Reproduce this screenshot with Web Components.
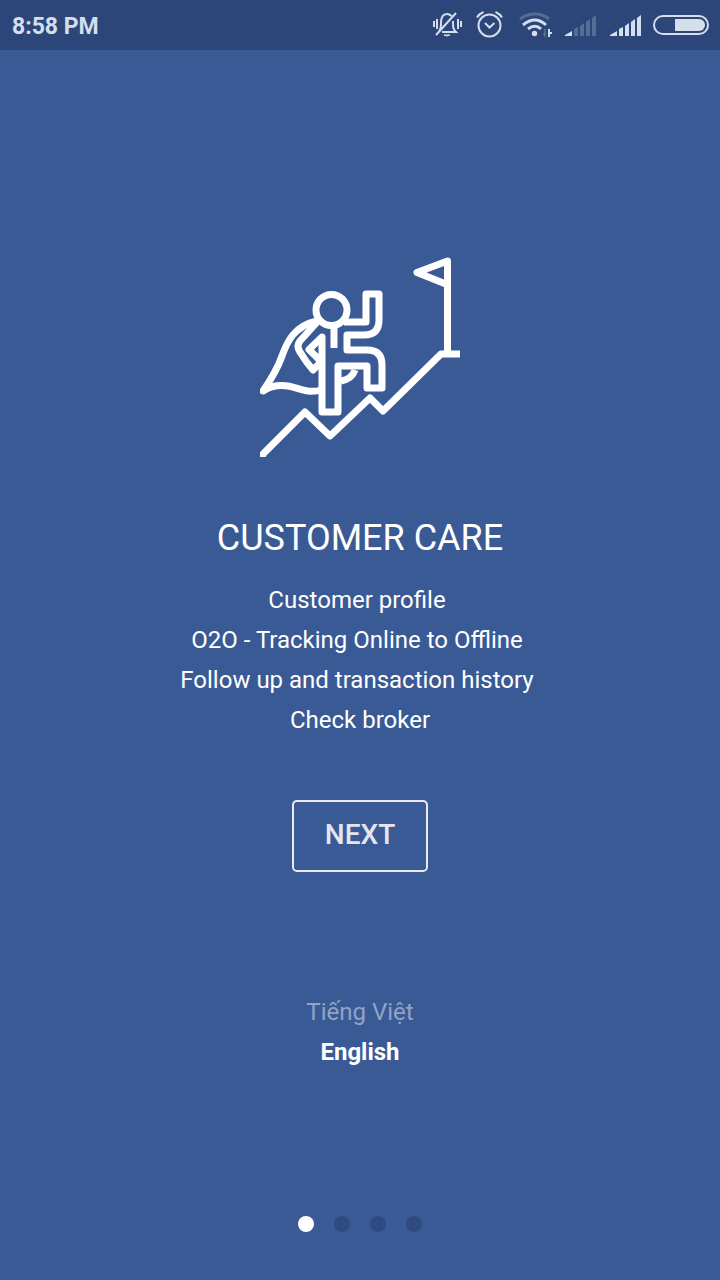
<!DOCTYPE html>
<html lang="en">
<head>
<meta charset="utf-8">
<meta name="viewport" content="width=device-width, initial-scale=1">
<title>Customer care</title>
<style>
  body { margin: 0; background: #3a5a96; color: #fff; font-family: Roboto, "Noto Sans", sans-serif; }
</style>
</head>
<body>
<onboarding-screen></onboarding-screen>

<template id="status-bar">
  <style>
    :host { display: flex; align-items: center; justify-content: space-between; height: 50px; padding: 0 11px 0 12px; box-sizing: border-box; background: #2d4679; color: #d5deec; }
    time { font-size: 23px; line-height: 28px; font-weight: 700; padding-top: 4px; }
    .icons { display: flex; align-items: center; gap: 12px; }
    svg { display: block; }
  </style>
  <time><slot></slot></time>
  <div class="icons">
    <svg width="32" height="28" viewBox="0 0 32 28" fill="none" stroke="currentColor" stroke-width="2" aria-hidden="true">
      <path d="M2 10v6M5 8v10M26 8v10M29 10v6" />
      <path d="M7 20c2-2 2-4 2-8 0-6 2.500-9 6-9 2 0 3.500 1 4.500 2M21 10c0 7 0 8 3 11H10M4 24 24 2" />
      <path d="M12 24h6l-3 1Z" fill="currentColor" stroke-width="1" />
    </svg>
    <svg width="28" height="28" viewBox="0 0 28 28" fill="none" stroke="currentColor" stroke-width="2" aria-hidden="true">
      <circle cx="13.500" cy="14.500" r="11" />
      <path d="m9 12 4.500 4.500 5-4.500" />
      <path d="M1 6.500Q3 3 7.500 1M19.500 1q4.500 2 6.500 5.500" />
    </svg>
    <svg width="37" height="28" viewBox="-3 0 37 28" fill="none" stroke="currentColor" stroke-width="3" aria-hidden="true">
      <path d="M1 8Q8 3 16 3t14 5" opacity=".25" />
      <path d="M4 14Q16 4 27 14M9 18Q16 12.500 22 18" />
      <circle cx="15.500" cy="22.500" r="2.700" fill="currentColor" stroke="none" />
      <path d="M26 18v8M24 23h2" stroke-width="1" opacity=".4" />
      <path d="M30 18v8M31 22h2" stroke-width="2" />
    </svg>
    <svg width="32" height="24" viewBox="0 0 32 24" fill="currentColor" aria-hidden="true">
      <path d="M0 23v-1l7-4v5Z" />
      <path d="M9 23v-7l4-2v9ZM15 23V13l4-3v13ZM21 23V9l4-3v17ZM27 23V5l4-3v21Z" opacity=".25" />
    </svg>
    <svg width="32" height="24" viewBox="0 0 32 24" fill="currentColor" aria-hidden="true">
      <path d="M1 23v-1l7-4v5ZM10 23v-7l4-2v9ZM16 23V13l4-3v13ZM22 23V9l4-3v17ZM28 23V5l4-3v21Z" />
    </svg>
    <svg width="56" height="20" viewBox="0 0 56 20" aria-hidden="true">
      <rect x="1" y="1" width="54" height="18" rx="9" fill="none" stroke="currentColor" stroke-width="2" />
      <path d="M22 4h24a6 6 0 0 1 0 12H22Z" fill="currentColor" />
    </svg>
  </div>
</template>

<template id="summit-icon">
  <style>
    :host { display: block; width: 200px; }
    svg { display: block; width: 100%; }
  </style>
  <svg viewBox="0 0 200 201" fill="none" stroke="#fff" stroke-width="7" stroke-linejoin="round" aria-hidden="true">
    <circle cx="71.500" cy="53" r="15.500" />
    <path d="M84 65h22V37h13v26q0 15-15 15H87v15h20q15 0 15 15v23h-15v-22H78v46H62V80L49 92.500l12 12M74 68v23" />
    <path d="M58 64 40 84q-4 5 0 11 6 10 13 18l9-9" />
    <path d="M57 64C34 69 27 85 22 99 17 113 10 124 3 134c9-6 17-6 25-5 11 2 20 8 33 4" />
    <path d="M81 124q11-2 14-11" />
    <path d="M3 197 45 155l25 24 40-38 13 13 58-57h19" />
    <path d="M0 195h6v5H0Z" fill="#fff" stroke="none" />
    <path d="M187.500 97V4L157 15.500l30 12" />
  </svg>
</template>

<template id="feature-card">
  <style>
    :host { display: flex; flex-direction: column; align-items: center; text-align: center; }
    h1 { margin: 58px 0 0; font-size: 36px; line-height: 44px; font-weight: 400; }
    .lines { margin: 20px 0 0; font-size: 24px; line-height: 40px; }
  </style>
  <slot name="icon"></slot>
  <h1><slot name="title"></slot></h1>
  <div class="lines"><slot></slot></div>
</template>

<template id="outline-button">
  <style>
    :host { display: block; }
    button { display: block; min-width: 136px; height: 72px; padding: 0 30px 2px; box-sizing: border-box; border: 2px solid #e9ebf2; border-radius: 5px; background: transparent; color: #e4e6ed; font: 500 28px/32px Roboto, sans-serif; cursor: pointer; }
  </style>
  <button type="button"><slot></slot></button>
</template>

<template id="language-picker">
  <style>
    :host { display: block; }
    nav { display: flex; flex-direction: column; align-items: center; font-size: 24px; line-height: 40px; }
    a { color: #92a3c5; text-decoration: none; }
    a[aria-current] { color: #fff; font-weight: 700; }
  </style>
  <nav aria-label="Language">
    <a href="#vi" lang="vi">Tiếng Việt</a>
    <a href="#en" aria-current="true">English</a>
  </nav>
</template>

<template id="page-dots">
  <style>
    :host { display: flex; gap: 20px; }
    button { width: 16px; height: 16px; padding: 0; border: 0; border-radius: 50%; background: #2e4a80; cursor: pointer; }
    button[aria-current] { background: #fff; }
  </style>
  <button type="button" aria-label="Page 1" aria-current="page"></button>
  <button type="button" aria-label="Page 2"></button>
  <button type="button" aria-label="Page 3"></button>
  <button type="button" aria-label="Page 4"></button>
</template>

<template id="onboarding-screen">
  <style>
    :host { display: flex; flex-direction: column; min-height: 100vh; }
    main { flex: 1; display: flex; flex-direction: column; align-items: center; padding: 207px 16px 48px; }
    p { margin: 0; }
    outline-button { margin-top: 60px; }
    language-picker { margin-top: 120px; }
    page-dots { margin-top: auto; }
  </style>
  <status-bar>8:58 PM</status-bar>
  <main>
    <feature-card>
      <summit-icon slot="icon"></summit-icon>
      <span slot="title">CUSTOMER CARE</span>
      <p>Customer profile&nbsp;</p>
      <p>O2O - Tracking Online to Offline&nbsp;</p>
      <p>Follow up and transaction history&nbsp;</p>
      <p>Check broker</p>
    </feature-card>
    <outline-button>NEXT</outline-button>
    <language-picker></language-picker>
    <page-dots></page-dots>
  </main>
</template>

<script>
  class TemplateElement extends HTMLElement {
    constructor() {
      super();
      const template = document.getElementById(this.localName);
      this.attachShadow({ mode: "open" }).append(template.content.cloneNode(true));
    }
  }
  class StatusBar extends TemplateElement {}
  class SummitIcon extends TemplateElement {}
  class FeatureCard extends TemplateElement {}
  class OutlineButton extends TemplateElement {}
  class LanguagePicker extends TemplateElement {}
  class PageDots extends TemplateElement {
    connectedCallback() {
      const dots = [...this.shadowRoot.querySelectorAll("button")];
      dots.forEach(dot => dot.addEventListener("click", () => {
        dots.forEach(other => other.removeAttribute("aria-current"));
        dot.setAttribute("aria-current", "page");
      }));
    }
  }
  class OnboardingScreen extends TemplateElement {}

  customElements.define("status-bar", StatusBar);
  customElements.define("summit-icon", SummitIcon);
  customElements.define("feature-card", FeatureCard);
  customElements.define("outline-button", OutlineButton);
  customElements.define("language-picker", LanguagePicker);
  customElements.define("page-dots", PageDots);
  customElements.define("onboarding-screen", OnboardingScreen);
</script>
</body>
</html>
